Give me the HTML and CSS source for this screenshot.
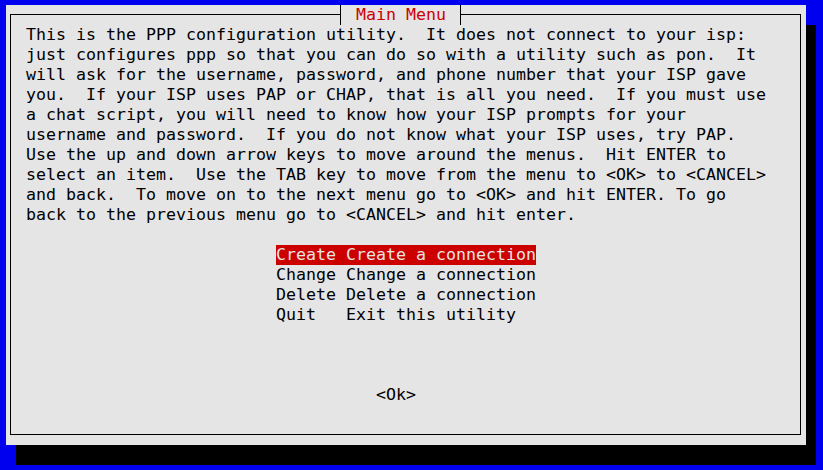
FILE: index.html
```html
<!DOCTYPE html>
<html>
<head>
<meta charset="utf-8" />
<title>PPP configuration</title>
<link rel="stylesheet" href="styles.css">
</head>
<body>
<div class="dialog">
	<div class="frame">
		<div class="title">Main Menu</div>
<div class="info">This is the PPP configuration utility.  It does not connect to your isp:
just configures ppp so that you can do so with a utility such as pon.  It
will ask for the username, password, and phone number that your ISP gave
you.  If your ISP uses PAP or CHAP, that is all you need.  If you must use
a chat script, you will need to know how your ISP prompts for your
username and password.  If you do not know what your ISP uses, try PAP.
Use the up and down arrow keys to move around the menus.  Hit ENTER to
select an item.  Use the TAB key to move from the menu to &lt;OK&gt; to &lt;CANCEL&gt;
and back.  To move on to the next menu go to &lt;OK&gt; and hit ENTER. To go
back to the previous menu go to &lt;CANCEL&gt; and hit enter.</div>
		<ul class="menu">
			<li class="sel">Create Create a connection</li>
			<li>Change Change a connection</li>
			<li>Delete Delete a connection</li>
			<li>Quit   Exit this utility</li>
		</ul>
		<div class="btn">&lt;Ok&gt;</div>
	</div>
</div>
</body>
</html>
```
FILE: styles.css
```css
*{margin:0;padding:0;}
html,body{height:100%;}
body{background:#0000ee;overflow:hidden;font-family:"DejaVu Sans Mono",monospace;font-size:16.61px;line-height:20px;color:#000;}
ul{list-style:none;}

.dialog{box-sizing:border-box;width:800px;height:440px;margin:5px 0 0 6px;padding:9px 5px 10px 4px;background:#e5e5e5;box-shadow:10px 20px 0 #000;}
.frame{position:relative;box-sizing:border-box;height:100%;border:1px solid #000;padding:10px 0 0 15px;}
.title{position:absolute;top:-10px;left:329px;height:20px;padding:0 14px 0 15px;border-left:1px solid #000;border-right:1px solid #000;background:#e5e5e5;color:#cd0000;white-space:pre;}

.info{white-space:pre;}
.menu{width:260px;margin:20px 0 0 250px;}
.menu li{height:20px;white-space:pre;}
.menu .sel{background:#cd0000;color:#e5e5e5;}
.btn{margin:60px 0 0 350px;white-space:pre;}
```
